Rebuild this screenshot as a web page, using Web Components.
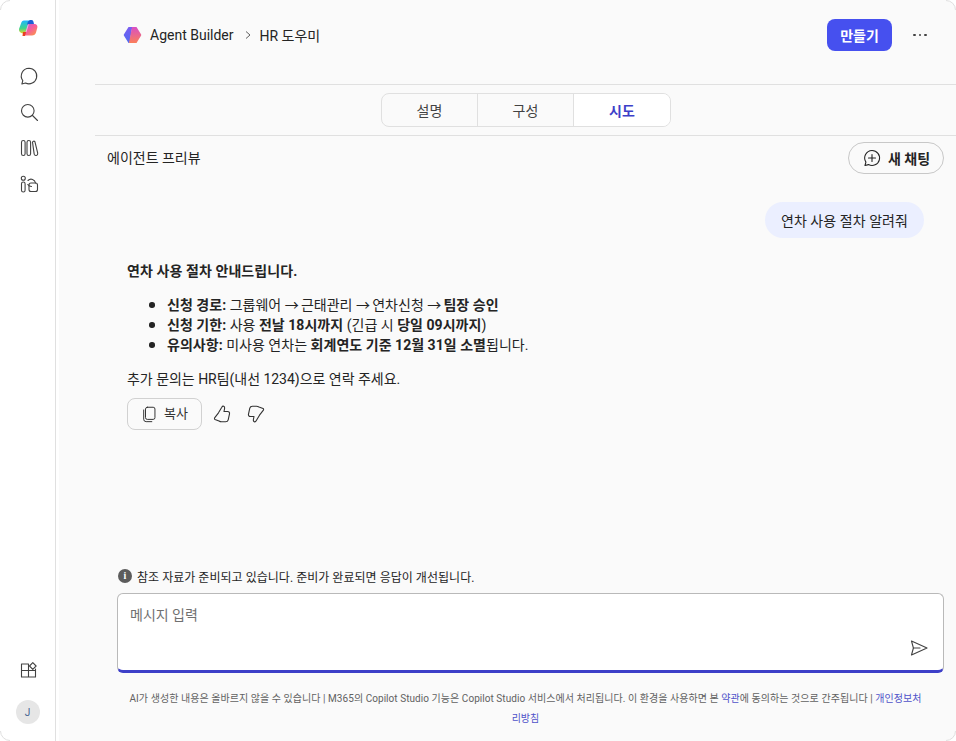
<!DOCTYPE html>
<html lang="ko"><head><meta charset="utf-8"><title>Agent Builder</title>
<style>
html,body{margin:0;padding:0;width:956px;height:741px;overflow:hidden;background:#fff}
body{font-family:Roboto,"Noto Sans CJK KR",sans-serif;color:#242424}
</style></head><body>
<app-shell></app-shell>
<script>
const UP='<path d="M6.500 8.800l3.300-5.600c.5-.9 1.200-1.200 1.900-.9.900.4 1.100 1.200.9 2.200L12 7.500h3.600c1.400 0 2.200 1 1.900 2.300l-1.300 6c-.3 1.300-1.200 2-2.600 2H9.500c-1 0-1.700-.3-2.500-.8L3 15.500c-.6-.4-.7-1-.4-1.600Z"/>';
const ICONS={
chat:'<path d="M10 2.200a7.800 7.800 0 1 1-3.500 14.800l-3.600 1 .9-3.400A7.800 7.800 0 0 1 10 2.200Z"/>',
search:'<circle cx="8.800" cy="8.800" r="6.300"/><path d="M13.500 13.500l5 5"/>',
lib:'<rect x="2.500" y="2.500" width="3.600" height="15" rx="1.800"/><rect x="8" y="2.500" width="3.600" height="15" rx="1.800"/><path d="M13.500 4.200c.3-1 1.600-1.500 2.400-.6l2.800 11.600c.2 1.200-.4 2.100-1.400 2.300-1 .2-1.800-.3-2.100-1.300Z"/>',
apps:'<rect x="2.500" y="8" width="3.600" height="10" rx="1.800"/><circle cx="4.300" cy="4.300" r="2"/><path d="M9 6.500a4.400 4.400 0 0 1 7.500 2.500M8.800 10.500a4.400 4.400 0 0 0 3.700 2"/><rect x="10" y="9" width="8.500" height="8.500" rx="2"/>',
store:'<path d="M2.500 3h7v6.500h-7zM2.500 9.500h7V16h-7zM9.500 9.500h7V16h-7zM9.500 6v3.500M16.500 8v1.500"/><path d="M13.800 1.700l3.300 3.300-3.300 3.300-3.300-3.300z"/>',
copy:'<rect x="5" y="2.500" width="10.500" height="13.500" rx="2"/><path d="M3 5.500v10.300A2.700 2.700 0 0 0 5.700 18.500H12"/>',
up:UP,
down:'<g transform="rotate(180 10 10)">'+UP+'</g>',
send:'<path d="M2.500 3l15.500 7-15.500 7 1.900-7Z"/><path d="M4.400 10H11"/>'
};
const svg=(n,s=20,sw=1.1)=>`<svg width="${s}" height="${s}" viewBox="0 0 20 20" fill="none" stroke="currentColor" stroke-width="${sw}" stroke-linecap="round" stroke-linejoin="round" aria-hidden="true">${ICONS[n]}</svg>`;
function def(name,html){customElements.define(name,class extends HTMLElement{
  constructor(){super();this.attachShadow({mode:'open'}).innerHTML=html;}
});}

def('side-rail',`<style>
:host{display:flex;flex-direction:column;align-items:center;width:55px;flex:none;border-right:1px solid #e0e0e0;height:741px;color:#424242}
.logo{margin-top:18px;height:20px}
.nav{display:flex;flex-direction:column;align-items:center;gap:16px;margin-top:28px}
.nav span,.b span{display:block;width:20px;height:20px;margin-left:2px}
.b{margin-top:auto;display:flex;flex-direction:column;align-items:center;gap:18px;padding-bottom:17px}
.b span{margin-bottom:1px}
.av{width:24px;height:24px;border-radius:50%;background:#e6e6e6;color:#44618f;font:10px Roboto,sans-serif;display:flex;align-items:center;justify-content:center}
</style>
<div class="logo"><svg width="20" height="20" viewBox="0 0 20 20"><defs>
<linearGradient id="a" x1="0" y1="0" x2="0" y2="1"><stop offset="0" stop-color="#1fb6ff"/><stop offset=".58" stop-color="#3ed68c"/><stop offset="1" stop-color="#ffd21f"/></linearGradient>
<linearGradient id="b" x1="0" y1="0" x2="1" y2="1"><stop offset="0" stop-color="#b45ce6"/><stop offset=".5" stop-color="#f65f98"/><stop offset="1" stop-color="#fca03c"/></linearGradient></defs>
<path d="M6 2.500h6.500L11 5 8.500 16 5 15.500C2.500 15 .5 13.500 1 11L3 5.500C3.500 3.500 4.500 2.500 6 2.500Z" fill="url(#a)"/>
<path d="M12 2h1.500c1.300 0 1.800.8 2 2l.5 2-7 .5L10 3.500Z" fill="#1c5fd6"/>
<path d="M10 6h6.500c2.300 0 3.300 1.800 2.800 3.800l-1.300 4.700c-.5 2-2 3-4 3H6.500c-1 0-1.200-.8-.8-1.500l2-2.500Z" fill="url(#b)"/>
<path d="M5 14h3l-1 4H4.500Z" fill="#e8401f"/><path d="M10.300 6.500L8 14" stroke="#fff" stroke-opacity=".55" fill="none"/></svg></div>
<div class="nav"><span>${svg('chat')}</span><span>${svg('search')}</span><span>${svg('lib')}</span><span>${svg('apps')}</span></div>
<div class="b"><span>${svg('store')}</span><div class="av">J</div></div>`);

def('top-bar',`<style>
:host{display:flex;align-items:center;height:85px;box-sizing:border-box;margin-left:36px;padding:0 28px 14px 28px;border-bottom:1px solid #e0e0e0;font-size:14px}
.t{margin-left:8px}.sep{margin:0 7px 0 9px;color:#616161;display:flex}
.btn{margin-left:auto;width:65px;height:32px;border-radius:8px;background:#4650ef;color:#fff;font-weight:700;display:flex;align-items:center;justify-content:center;font-size:14px}
.more{margin-left:20px;width:16px;display:flex;justify-content:center;gap:3px}
.more i{width:2.400px;height:2.400px;border-radius:50%;background:#424242}
</style>
<svg width="19" height="18" viewBox="0 0 19 18"><defs><linearGradient id="l" x1="0" y1="0" x2="0" y2="1"><stop offset="0" stop-color="#7b5cf0"/><stop offset="1" stop-color="#4f6cf2"/></linearGradient><linearGradient id="r" x1="0" y1="0" x2="0" y2="1"><stop offset="0" stop-color="#d84fc4"/><stop offset="1" stop-color="#fb7e5a"/></linearGradient></defs>
<path d="M5.500 1h3.800L6.500 17H5.500L1 9.800c-.4-.5-.4-1.100 0-1.600Z" fill="url(#l)"/><path d="M9 1h4.500L18 8.200c.4.500.4 1.100 0 1.600L13.500 17H6Z" fill="url(#r)"/></svg>
<span class="t">Agent Builder</span><span class="sep"><svg width="10" height="10" viewBox="0 0 10 10" fill="none" stroke="currentColor"><path d="M3 1.500L7 5 3 8.500"/></svg></span><span>HR 도우미</span>
<span class="btn">만들기</span><span class="more"><i></i><i></i><i></i></span>`);

def('tab-row',`<style>
:host{display:flex;justify-content:center;height:51px;box-sizing:border-box;margin-left:36px;padding:8px 0 0;border-bottom:1px solid #e0e0e0}
.g{display:grid;grid-template-columns:95px 96px 97px;height:34px;box-sizing:border-box;border:1px solid #e0e0e0;border-radius:8px;overflow:hidden;font-size:14px;color:#424242}
.g div{display:flex;align-items:center;justify-content:center;border-left:1px solid #e0e0e0;padding-left:1px}
.g div:first-child{border-left:0}
.on{background:#fff;color:#3d3fc8;font-weight:700}
</style><div class="g"><div>설명</div><div>구성</div><div class="on">시도</div></div>`);

def('preview-bar',`<style>
:host{display:flex;align-items:center;justify-content:space-between;height:38px;padding:6px 12px 0 48px;box-sizing:border-box;font-size:14px}
.l{padding-bottom:2px}
.n{display:flex;align-items:center;gap:6px;height:32px;box-sizing:border-box;width:96px;padding-left:13px;border:1px solid #c8c8c8;border-radius:16px;font-weight:700;font-size:14px}
</style><span class="l">에이전트 프리뷰</span><span class="n"><svg width="20" height="20" viewBox="0 0 20 20" fill="none" stroke="#242424" stroke-width="1.100" stroke-linecap="round" stroke-linejoin="round"><path d="M10 2.500a7.500 7.500 0 1 1-3.500 14.100L3 17.500l.9-3.400A7.500 7.500 0 0 1 10 2.500Z"/><path d="M10 6.500v7M6.500 10h7"/></svg>새 채팅</span>`);

def('user-bubble',`<style>
:host{display:flex;justify-content:flex-end;padding:28px 32px 0 0}
div{height:36px;box-sizing:border-box;padding:0 16px;display:flex;align-items:center;background:#ebefff;border-radius:18px;font-size:14px;letter-spacing:.06px}
</style><div><slot></slot></div>`);

def('bot-reply',`<style>
:host{display:block;margin:23px 0 0 68px;font-size:14px;line-height:20px}
p{margin:0}
.h{letter-spacing:.08px}
.e{letter-spacing:-.03px}
ul{margin:14px 0 14px;padding:0 0 0 40px;letter-spacing:.03px;list-style:none}
li{position:relative}
li::before{content:"";position:absolute;left:-18px;top:7px;width:5.500px;height:5.500px;border-radius:50%;background:#242424}
.ar{letter-spacing:-1.400px}
b{font-weight:700}
.a{display:flex;align-items:center;margin-top:9px;color:#333}
.c{display:flex;align-items:center;justify-content:center;gap:5px;width:75px;height:32px;box-sizing:border-box;border:1px solid #d1d1d1;border-radius:8px;font-size:13px}
.a>span{display:flex}.u{margin-left:10px}.d{margin-left:14px}
</style><slot></slot>
<p class="h"><b>연차 사용 절차 안내드립니다.</b></p>
<ul><li><b>신청 경로:</b> 그룹웨어 <span class="ar">→</span> 근태관리 <span class="ar">→</span> 연차신청 <span class="ar">→</span> <b>팀장 승인</b></li>
<li><b>신청 기한:</b> 사용 <b>전날 18시까지</b> (긴급 시 <b>당일 09시까지</b>)</li>
<li><b>유의사항:</b> 미사용 연차는 <b>회계연도 기준 12월 31일 소멸</b>됩니다.</li></ul>
<p class="e">추가 문의는 HR팀(내선 1234)으로 연락 주세요.</p>
<div class="a"><div class="c">${svg('copy',18)}복사</div><span class="u">${svg('up',20)}</span><span class="d">${svg('down',20)}</span></div>`);

def('composer-box',`<style>
:host{display:block;margin:0 12px 0 58px}
.i{display:flex;align-items:center;gap:5px;font-size:12px;height:16px;padding-left:1px;letter-spacing:.03px}
.dot{width:14px;height:14px;border-radius:50%;background:#5c5c5c;color:#fff;font:700 10px/14px "Liberation Serif",serif;text-align:center}
.box{margin-top:9px;height:80px;box-sizing:border-box;background:#fff;border:1px solid #b9b9b9;border-bottom:3px solid #3d3fc8;border-radius:6px;padding:10px 14px 0 12px;display:flex;flex-direction:column;font-size:14px;color:#707070}
.s{align-self:flex-end;margin-top:auto;margin-bottom:12px;color:#424242;display:flex}
</style>
<div class="i"><span class="dot">i</span><span>참조 자료가 준비되고 있습니다. 준비가 완료되면 응답이 개선됩니다.</span></div>
<div class="box"><span>메시지 입력</span><span class="s">${svg('send',20)}</span></div>`);

def('legal-note',`<style>
:host{display:block;margin:16px 12px 0 58px;padding:0 12px 0 2px;font-size:10px;line-height:20px;text-align:center;color:#616161;letter-spacing:.05px}
a{color:#4f52c9;text-decoration:none}
</style>AI가 생성한 내용은 올바르지 않을 수 있습니다 | M365의 Copilot Studio 기능은 Copilot Studio 서비스에서 처리됩니다. 이 환경을 사용하면 본 <a>약관</a>에 동의하는 것으로 간주됩니다 | <a>개인정보처</a><br><a>리방침</a>`);

def('app-shell',`<style>
:host{display:flex;position:relative;width:956px;height:741px;background:#fff;overflow:hidden}
.gut{width:3px;flex:none}
main{flex:1;min-width:0;display:flex;flex-direction:column;background:#fafafa}
.sp{flex:1}
.cn{position:absolute;width:10px;height:10px;overflow:hidden}
.cn i{display:block;position:absolute;width:20px;height:20px;box-sizing:border-box;border:1px solid #e0e0e0;border-radius:10px;box-shadow:0 0 0 12px #fff}
.tl{left:0;top:0}.tr{right:0;top:0}.bl{left:0;bottom:0}.br{right:0;bottom:0}
.tr i,.br i{right:0}.bl i,.br i{bottom:0}
</style>
<side-rail></side-rail><div class="gut"></div>
<main><top-bar></top-bar><tab-row></tab-row><preview-bar></preview-bar>
<user-bubble>연차 사용 절차 알려줘</user-bubble><bot-reply></bot-reply>
<div class="sp"></div><composer-box></composer-box><legal-note></legal-note><div style="height:12px"></div></main>
<div class="cn tl"><i></i></div><div class="cn tr"><i></i></div><div class="cn bl"><i></i></div><div class="cn br"><i></i></div>`);
</script></body></html>
